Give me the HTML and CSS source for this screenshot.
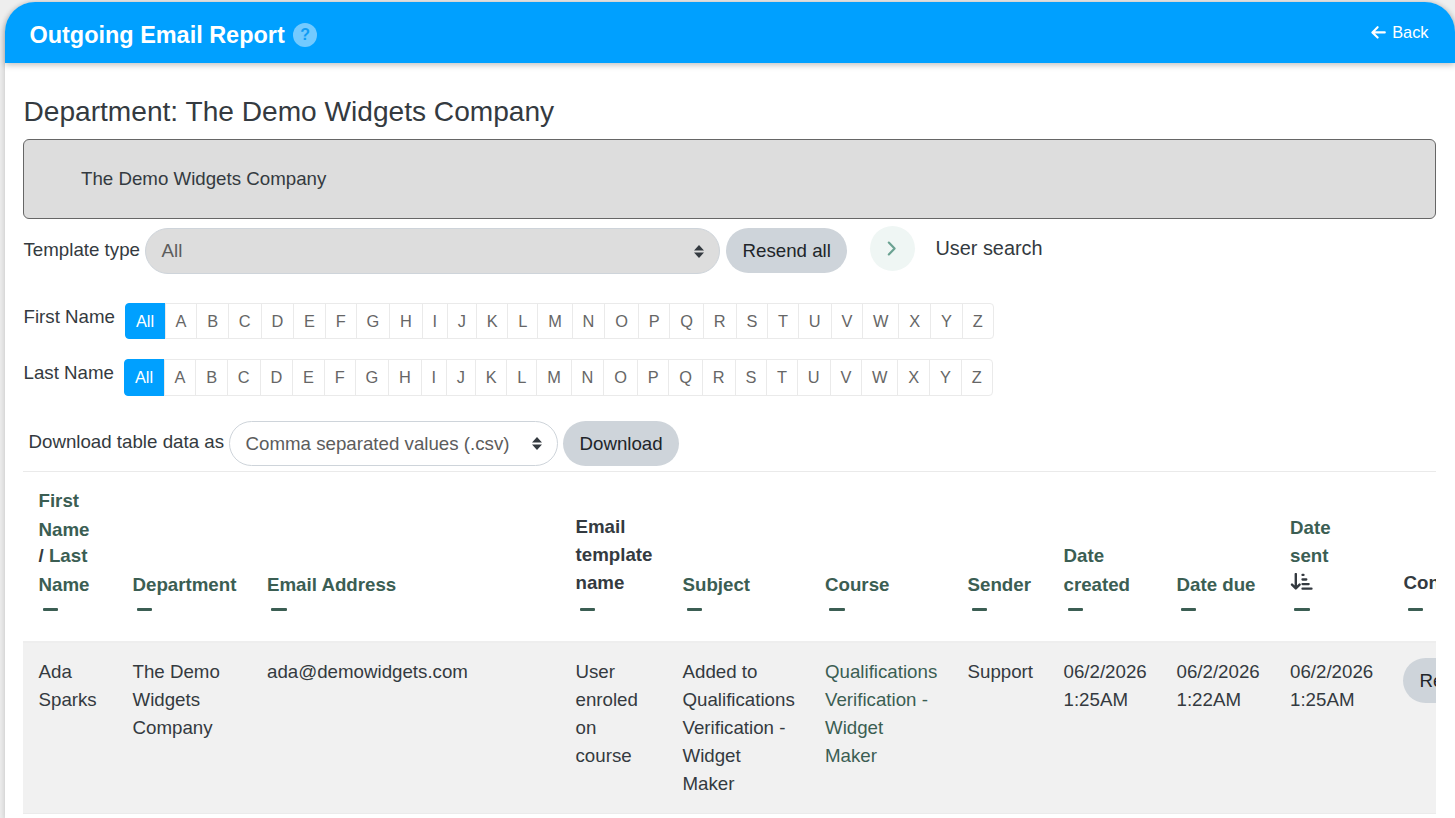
FILE: index.html
```html
<!DOCTYPE html>
<html lang="en">
<head>
<meta charset="utf-8">
<title>Outgoing Email Report</title>
<link rel="stylesheet" href="styles.css">
</head>
<body>
<main class="card">
  <header class="card-header">
    <h1 class="title">Outgoing Email Report</h1>
    <span class="help">?</span>
    <a class="back"><svg width="15" height="13" viewBox="0 0 15 13"><path d="M6.6 1.2 1.4 6.4l5.2 5.2M1.8 6.4h12" fill="none" stroke="#fff" stroke-width="2.1" stroke-linecap="round" stroke-linejoin="round"/></svg>Back</a>
  </header>
  <section class="content">
    <h2 class="department">Department: The Demo Widgets Company</h2>
    <div class="tree">The Demo Widgets Company</div>

    <div class="filters">
      <label class="filter-label">Template type</label>
      <div class="select select-type">All<svg width="10" height="13" viewBox="0 0 10 13"><path d="M5 0 10 5.4H0zM5 13 0 7.6h10z" fill="#343a40"/></svg></div>
      <button class="btn">Resend all</button>
      <span class="toggle"><svg width="10" height="15" viewBox="0 0 10 15"><path d="M1.8 1.6 7.6 7.5l-5.8 5.9" fill="none" stroke="#6ba292" stroke-width="2.2" stroke-linecap="round" stroke-linejoin="round"/></svg></span>
      <span class="search-label">User search</span>
    </div>

    <div class="initials">
      <span class="initials-label">First Name</span>
      <ul class="pages"><li class="active">All</li><li>A</li><li>B</li><li>C</li><li>D</li><li>E</li><li>F</li><li>G</li><li>H</li><li>I</li><li>J</li><li>K</li><li>L</li><li>M</li><li>N</li><li>O</li><li>P</li><li>Q</li><li>R</li><li>S</li><li>T</li><li>U</li><li>V</li><li>W</li><li>X</li><li>Y</li><li>Z</li></ul>
    </div>
    <div class="initials initials-last">
      <span class="initials-label">Last Name</span>
      <ul class="pages"><li class="active">All</li><li>A</li><li>B</li><li>C</li><li>D</li><li>E</li><li>F</li><li>G</li><li>H</li><li>I</li><li>J</li><li>K</li><li>L</li><li>M</li><li>N</li><li>O</li><li>P</li><li>Q</li><li>R</li><li>S</li><li>T</li><li>U</li><li>V</li><li>W</li><li>X</li><li>Y</li><li>Z</li></ul>
    </div>

    <div class="download">
      <label class="download-label">Download table data as</label>
      <div class="select select-format">Comma separated values (.csv)<svg width="10" height="13" viewBox="0 0 10 13"><path d="M5 0 10 5.4H0zM5 13 0 7.6h10z" fill="#343a40"/></svg></div>
      <button class="btn">Download</button>
    </div>

    <div class="table-wrap">
      <table class="report">
        <colgroup><col class="c-name"><col class="c-dept"><col class="c-email"><col class="c-template"><col class="c-subject"><col class="c-subject"><col class="c-sender"><col class="c-date"><col class="c-sent"><col class="c-sent"><col class="c-control"></colgroup>
        <thead>
          <tr>
            <th><a>First</a><a class="tight">Name</a><div class="line"><span class="slash">/</span> Last</div><a>Name</a><i class="dash"></i></th>
            <th><a>Department</a><i class="dash"></i></th>
            <th><a>Email Address</a><i class="dash"></i></th>
            <th class="plain">Email<br>template<br>name<i class="dash"></i></th>
            <th><a>Subject</a><i class="dash"></i></th>
            <th><a>Course</a><i class="dash"></i></th>
            <th><a>Sender</a><i class="dash"></i></th>
            <th><a>Date</a><a>created</a><i class="dash"></i></th>
            <th><a>Date due</a><i class="dash"></i></th>
            <th class="sorted">Date<br>sent<svg class="sort" width="23" height="18" viewBox="0 0 23 18"><path d="M5.8 1v14M2 11.6l3.8 3.8 3.8-3.8" fill="none" stroke="#343a40" stroke-width="2.4" stroke-linecap="round" stroke-linejoin="round"/><path d="M12.5 1.9h1M12.5 6.5h3.8M12.5 11.1h6.2M12.5 15.7h9" stroke="#343a40" stroke-width="2.3" stroke-linecap="round"/></svg><i class="dash"></i></th>
            <th class="plain">Control<i class="dash"></i></th>
          </tr>
        </thead>
        <tbody>
          <tr>
            <td>Ada<br>Sparks</td>
            <td>The Demo<br>Widgets<br>Company</td>
            <td>ada@demowidgets.com</td>
            <td>User<br>enroled<br>on<br>course</td>
            <td>Added to<br>Qualifications<br>Verification -<br>Widget<br>Maker</td>
            <td class="link">Qualifications<br>Verification -<br>Widget<br>Maker</td>
            <td>Support</td>
            <td>06/2/2026<br>1:25AM</td>
            <td>06/2/2026<br>1:22AM</td>
            <td>06/2/2026<br>1:25AM</td>
            <td><button class="btn">Resend</button></td>
          </tr>
        </tbody>
      </table>
    </div>
  </section>
</main>
</body>
</html>
```
FILE: styles.css
```css
* { box-sizing: border-box; }
html { font-size: 18.72px; }
body {
  margin: 0;
  height: 818px;
  padding: 2px 0 0 5px;
  overflow: hidden;
  background: #eee;
  color: #343a40;
  font-family: "Liberation Sans", Arial, sans-serif;
  line-height: 28px;
}
.card {
  width: 1450px;
  height: 816px;
  background: #fff;
  border-radius: 30px 30px 0 0;
  box-shadow: 0 2px 6px rgba(0, 0, 0, .2);
}
.card-header {
  display: flex;
  align-items: center;
  height: 61px;
  padding: 5px 26px 0 24.5px;
  background: #00a0ff;
  color: #fff;
  border-radius: 30px 30px 0 0;
  box-shadow: 0 2px 6px rgba(0, 0, 0, .25);
}
.title { margin: 0; font-size: 23.45px; font-weight: 700; }
.help {
  width: 24px;
  height: 24px;
  margin-left: 8.5px;
  border-radius: 50%;
  background: #73caff;
  color: #0f9cf5;
  font-size: 16px;
  font-weight: 700;
  line-height: 24px;
  text-align: center;
}
.back {
  display: flex;
  align-items: center;
  gap: 6px;
  margin: 0 .5px 6px auto;
  font-size: .875rem;
}
.content { padding: 27px 19px 0 18px; }
.department {
  margin: 0;
  height: 49px;
  padding-left: .5px;
  font-size: 28.12px;
  font-weight: 400;
  line-height: 44px;
}
.tree {
  height: 80px;
  padding-left: 57px;
  border: 1px solid #666;
  border-radius: 6px;
  background: #ddd;
  line-height: 77px;
}
.filters { display: flex; height: 84px; padding-top: 9px; }
.filter-label { width: 122px; padding-left: .5px; line-height: 44px; }
.select {
  display: flex;
  align-items: center;
  justify-content: space-between;
  border: 1px solid #ced4da;
  border-radius: 23px;
  padding: 0 15px 0 15.5px;
  color: #5c5c5c;
}
.select-type { width: 575px; height: 46px; background: #ddd; margin-right: 6px; }
.btn {
  height: 45px;
  padding: 0 16.5px;
  border: 0;
  border-radius: 23px;
  background: #ced4da;
  color: #212529;
  font: inherit;
  white-space: nowrap;
}
.toggle {
  display: flex;
  align-items: center;
  justify-content: center;
  width: 45px;
  height: 45px;
  margin: -2px 20px 0 23px;
  padding-right: 1px;
  border-radius: 50%;
  background: #eff6f4;
}
.search-label { font-size: 19.9px; line-height: 40px; }
.initials { display: flex; height: 56px; }
.initials-label { width: 102px; padding-left: .5px; line-height: 27px; }
.initials-last .initials-label { width: 101px; }
.pages {
  display: flex;
  height: 36px;
  margin: 0;
  padding: 0;
  list-style: none;
  color: #666;
  font-size: .875rem;
  line-height: 35px;
}
.initials-last .pages { height: 37px; }
.pages li {
  margin-left: -1px;
  padding: 0 9.88px;
  border: 1px solid #eaeaea;
}
.pages .active {
  width: 40.6px;
  margin: 0;
  background: #00a0ff;
  border-color: #00a0ff;
  border-radius: 4px 0 0 4px;
  color: #fff;
}
.pages li:last-child { border-radius: 0 4px 4px 0; }
.download { display: flex; height: 56px; padding: 6px 0 0 5px; }
.download-label { width: 201px; padding-left: .5px; line-height: 41px; white-space: nowrap; }
.select-format { width: 329px; height: 45px; margin-right: 5px; white-space: nowrap; }
.table-wrap { overflow: hidden; }
.report {
  width: 1500px;
  table-layout: fixed;
  border-collapse: separate;
  border-spacing: 0;
}
.c-name { width: 94px; }
.c-dept { width: 134.5px; }
.c-email { width: 308.5px; }
.c-template { width: 107px; }
.c-subject { width: 142.5px; }
.c-sender { width: 96px; }
.c-date { width: 113px; }
.c-sent { width: 113.5px; }
.c-control { width: 135px; }
th {
  height: 170px;
  padding: 0 0 30.5px 15.5px;
  border-top: 1px solid #eaeaea;
  color: #3b5e53;
  font-weight: 700;
  text-align: left;
  vertical-align: bottom;
  white-space: nowrap;
}
th a { display: block; height: 29px; }
th .tight { height: 26px; }
.line { height: 29px; }
.slash, .plain { color: #343a40; }
.dash {
  display: block;
  width: 15.5px;
  height: 2.5px;
  margin: 8px 0 0 4px;
  border-radius: 1px;
  background: #3b5e53;
}
.plain .dash { margin-top: 11px; }
.sort { display: block; margin-top: 3px; }
.sorted .dash { margin-top: 17px; }
td {
  height: 173px;
  padding: 15px 0 0 15px;
  border-top: 2px solid #eee;
  border-bottom: 1px solid #ebebeb;
  background: #f1f1f1;
  vertical-align: top;
  white-space: nowrap;
}
td:not(:last-child) { padding-left: 15.5px; }
.link { color: #3b5e53; }
```
